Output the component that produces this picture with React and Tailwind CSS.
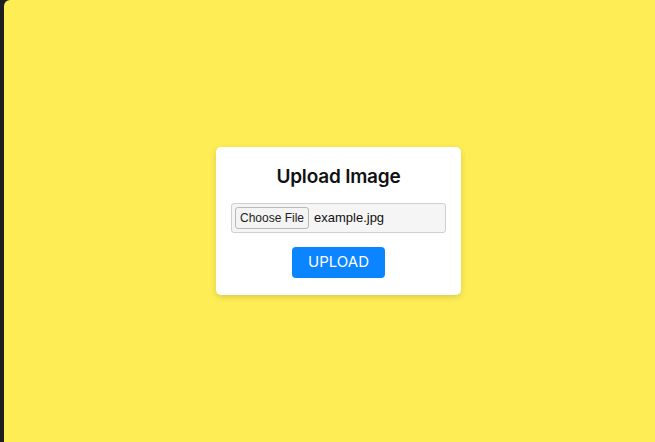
export default function App() {
  return (
    <div className="flex h-[442px] w-[655px] bg-[#1e1e1e]" style={{ fontFamily: 'Inter, "Liberation Sans", sans-serif' }}>
      <div className="w-[4px]" />
      <div className="flex flex-1 items-center justify-center rounded-tl-[6px] bg-[#ffed55] pl-[18px]">
        <div className="flex w-[245px] flex-col items-center rounded-[5px] bg-white px-[15px] pt-[18px] pb-[17px] shadow-[0_2px_6px_rgba(0,0,0,0.15)]">
          <h2 className="h-[24px] text-[19px] leading-[24px] font-semibold tracking-[-0.2px] text-[#111]">Upload Image</h2>
          <div className="mt-[14px] flex h-[30px] w-[215px] items-center gap-[5px] rounded-[3px] border border-[#cfcfcf] bg-[#f5f5f5] px-[3px]" style={{ fontFamily: '"Liberation Sans", Arial, sans-serif' }}>
            <button className="h-[22px] w-[74px] rounded-[3px] border border-[#b9b9b9] bg-[#f4f4f4] text-[12px] leading-[20px] text-[#222]">Choose File</button>
            <span className="text-[13px] text-[#111]">example.jpg</span>
          </div>
          <button className="mt-[14px] h-[31px] w-[93px] rounded-[4px] bg-[#0a84ff] text-[15px] font-normal text-white">UPLOAD</button>
        </div>
      </div>
    </div>
  );
}
